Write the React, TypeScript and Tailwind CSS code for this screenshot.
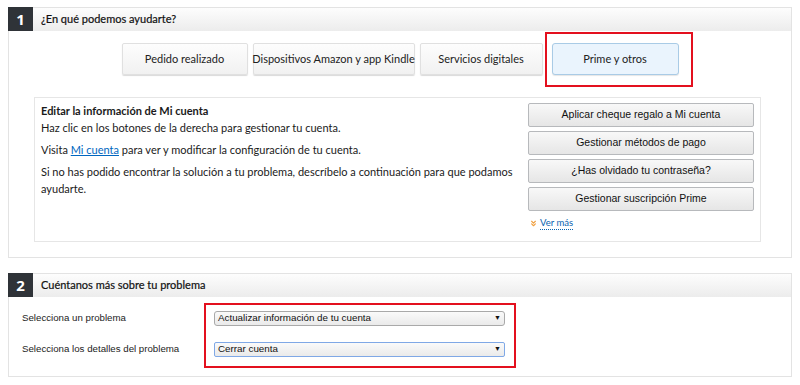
import { ChevronsDown } from "lucide-react";

const tabs = [
  { label: "Pedido realizado", w: "w-[126px]" },
  { label: "Dispositivos Amazon y app Kindle", w: "w-[162px]" },
  { label: "Servicios digitales", w: "w-[123px]" },
];

const actions = [
  "Aplicar cheque regalo a Mi cuenta",
  "Gestionar métodos de pago",
  "¿Has olvidado tu contraseña?",
  "Gestionar suscripción Prime",
];

function SectionHeader({ num, title }: { num: string; title: string }) {
  return (
    <div className="flex h-[24px]">
      <div className="w-[25px] h-[24px] bg-[#2f3338] text-white flex items-center justify-center font-bold text-[15px] font-['Open_Sans',sans-serif]">
        {num}
      </div>
      <div className="flex-1 flex items-center pl-[8px] border-t border-r border-[#e3e3e3] bg-gradient-to-b from-[#fdfdfd] to-[#ececec] text-[11px] text-[#111] font-['Lato',sans-serif] [-webkit-text-stroke:0.2px_#111]">
        {title}
      </div>
    </div>
  );
}

export default function App() {
  return (
    <div className="w-[800px] h-[385px] bg-white relative pt-[7px] px-[8px]">
      {/* panel 1 */}
      <div className="w-[784px]">
        <SectionHeader num="1" title="¿En qué podemos ayudarte?" />
        <div className="h-[227px] border-x border-b border-[#e3e3e3] pt-[12px]">
          <div className="flex justify-center gap-[5px] font-['Lato',sans-serif] text-[11px] text-[#222]">
            {tabs.map((t) => (
              <div
                key={t.label}
                className={`${t.w} h-[32px] flex items-center justify-center rounded-[2px] border border-[#e0e0e0] bg-gradient-to-b from-[#fdfdfd] to-[#f1f1f1] shadow-[0_1px_1px_rgba(0,0,0,0.15)] whitespace-nowrap`}
              >
                {t.label}
              </div>
            ))}
            <div className="w-[127px] ml-[4px] h-[32px] flex items-center justify-center rounded-[3px] border border-[#a9cbe6] bg-[#eaf4fd] shadow-[0_1px_1px_rgba(0,0,0,0.1)]">
              Prime y otros
            </div>
          </div>

          <div className="ml-[25px] w-[727px] h-[145px] mt-[22px] border border-[#e6e6e6] flex justify-between">
            <div className="pl-[6px] pt-[4px] text-[11px] leading-[17px] text-[#1a1a1a] font-['Lato',sans-serif] w-[480px]">
              <div className="font-bold">Editar la información de Mi cuenta</div>
              <div>Haz clic en los botones de la derecha para gestionar tu cuenta.</div>
              <div className="mt-[5px]">
                Visita <span className="text-[#0066c0] underline">Mi cuenta</span> para ver y modificar la configuración de tu cuenta.
              </div>
              <div className="mt-[5px]">
                Si no has podido encontrar la solución a tu problema, descríbelo a continuación para que podamos ayudarte.
              </div>
            </div>
            <div className="pr-[6px] pt-[5px] flex flex-col gap-[4px] font-['Liberation_Sans',sans-serif] text-[10.5px] text-[#111]">
              {actions.map((a) => (
                <div
                  key={a}
                  className="w-[226px] h-[24px] flex items-center justify-center rounded-[2px] border border-[#b7b9bc] bg-gradient-to-b from-[#f8f8f8] to-[#e6e6e6]"
                >
                  {a}
                </div>
              ))}
              <div className="flex items-center gap-[2px] pl-[1px] mt-[2px] text-[9.5px] font-['Lato',sans-serif]">
                <ChevronsDown className="w-[9px] h-[9px] text-[#f0a040]" strokeWidth={3} />
                <span className="text-[#0a64b0] border-b border-dotted border-[#0a64b0] leading-[12px]">Ver más</span>
              </div>
            </div>
          </div>
        </div>
      </div>

      {/* panel 2 */}
      <div className="w-[784px] mt-[15px]">
        <SectionHeader num="2" title="Cuéntanos más sobre tu problema" />
        <div className="h-[80px] border-x border-b border-[#e3e3e3] pt-[14px] pl-[13px] font-['Liberation_Sans',sans-serif] text-[9.7px] text-[#222]">
          <div className="flex items-center h-[15px]">
            <div className="w-[192px]">Selecciona un problema</div>
            <div className="w-[291px] h-[15px] flex items-center justify-between px-[3px] rounded-[3px] border border-[#a9a9a9] bg-gradient-to-b from-[#fafafa] to-[#eaeaea] text-[9.8px] text-[#111]">
              <span>Actualizar información de tu cuenta</span>
              <span className="text-[7px]">▼</span>
            </div>
          </div>
          <div className="flex items-center h-[15px] mt-[16px]">
            <div className="w-[192px]">Selecciona los detalles del problema</div>
            <div className="w-[291px] h-[15px] flex items-center justify-between px-[3px] rounded-[2px] border border-[#7fa8e6] bg-gradient-to-b from-[#fafafa] to-[#eaeaea] text-[9.8px] text-[#111]">
              <span>Cerrar cuenta</span>
              <span className="text-[7px]">▼</span>
            </div>
          </div>
        </div>
      </div>

      {/* red annotation boxes */}
      <div className="absolute left-[545px] top-[32px] w-[148px] h-[55px] border-[2px] border-[#e3101e]" />
      <div className="absolute left-[204px] top-[303px] w-[312px] h-[65px] border-[2px] border-[#e3101e]" />
    </div>
  );
}
